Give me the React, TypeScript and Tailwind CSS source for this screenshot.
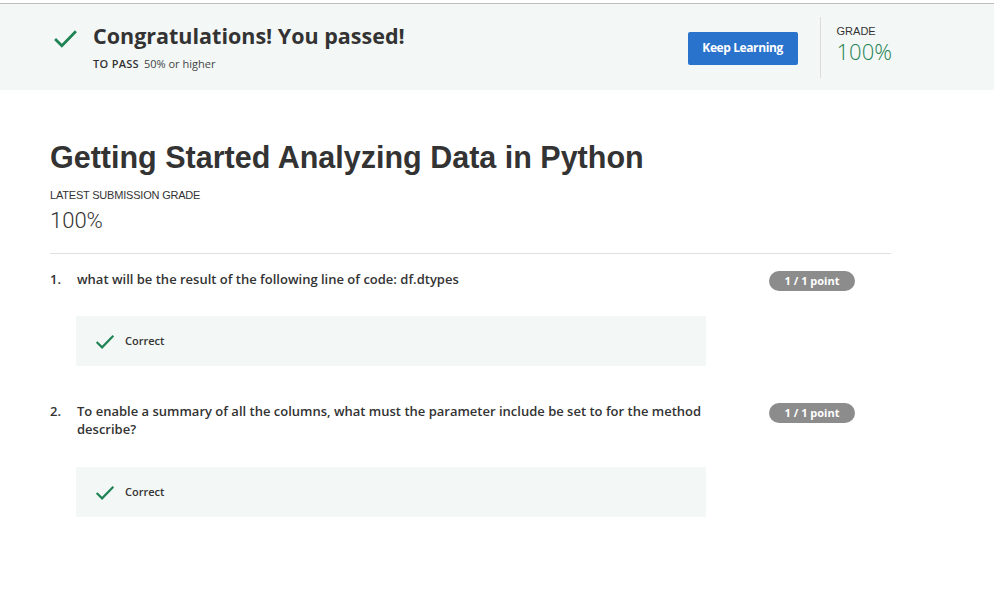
const questions = [
  {
    n: "1.",
    text: "what will be the result of the following line of code: df.dtypes",
    gap: "mt-[25px]",
  },
  {
    n: "2.",
    text: "To enable a summary of all the columns, what must the parameter include be set to for the method describe?",
    gap: "mt-[29px]",
  },
];

function CheckMark({ className }: { className: string }) {
  return (
    <svg viewBox="0 0 24 18" className={className} fill="none">
      <path d="M2 9.5 L8.5 16 L22 2" stroke="#1f8354" strokeWidth="2.6" />
    </svg>
  );
}

export default function App() {
  return (
    <div className="min-h-[595px] bg-white font-['Open_Sans',sans-serif] text-[#333]">
      <div className="h-[3px] bg-white" />
      <header className="flex h-[87px] border-t border-[#bdbdbd] bg-[#f3f8f6]">
        <div className="flex pl-[53px] pt-[19px]">
          <CheckMark className="mt-[6px] h-[19px] w-[25px]" />
          <div className="ml-[15px]">
            <h1 className="text-[21.5px] font-bold leading-[26px] text-[#333]">
              Congratulations! You passed!
            </h1>
            <p className="mt-[8px] text-[11px] leading-[14px] text-[#333]">
              <span className="font-semibold tracking-[0.3px]">TO PASS</span>
              <span className="ml-[5px] text-[#444]">50% or higher</span>
            </p>
          </div>
        </div>
        <div className="ml-auto flex items-center pr-[102px]">
          <button className="mt-[2px] h-[33px] w-[110px] rounded-[2px] bg-[#2a73cc] text-[12px] font-bold tracking-[-0.4px] text-white">
            Keep Learning
          </button>
          <div className="ml-[22px] h-[61px] w-px bg-[#dcdcdc]" />
          <div className="ml-[16px] pb-[6px]">
            <div className="text-[11px] leading-[13px] text-[#333] font-['Liberation_Sans',sans-serif]">
              GRADE
            </div>
            <div className="mt-[1px] text-[22px] font-light leading-[24px] text-[#1f8354]">
              100%
            </div>
          </div>
        </div>
      </header>

      <main className="ml-[50px] w-[841px] pt-[50px]">
        <h2 className="font-['Liberation_Sans',sans-serif] text-[30.5px] font-bold leading-[34px] text-[#333]">
          Getting Started Analyzing Data in Python
        </h2>
        <div className="mt-[15px] font-['Liberation_Sans',sans-serif] text-[11px] leading-[13px] tracking-[-0.2px] text-[#333]">
          LATEST SUBMISSION GRADE
        </div>
        <div className="mt-[6px] font-['Roboto',sans-serif] text-[22px] font-light leading-[26px] text-[#333]">
          100%
        </div>
        <div className="mt-[19px] h-px bg-[#e0e0e0]" />

        {questions.map((q, i) => (
          <section key={i} className={i === 0 ? "pt-[16px]" : "pt-[36px]"}>
            <div className="flex items-start">
              <span className="w-[27px] text-[13px] font-semibold leading-[18px]">
                {q.n}
              </span>
              <p className="w-[640px] text-[13px] font-semibold leading-[18px] text-[#333]">
                {q.text}
              </p>
              <span className="ml-[52px] mt-[1px] flex h-[20px] w-[86px] items-center justify-center rounded-full bg-[#8c8c8c] text-[11px] font-bold text-white">
                1 / 1 point
              </span>
            </div>
            <div className={`ml-[26px] flex h-[50px] w-[630px] items-center bg-[#f3f8f6] pl-[19px] ${q.gap}`}>
              <CheckMark className="h-[15px] w-[20px]" />
              <span className="ml-[10px] text-[11px] font-semibold text-[#333]">
                Correct
              </span>
            </div>
          </section>
        ))}
      </main>
    </div>
  );
}
